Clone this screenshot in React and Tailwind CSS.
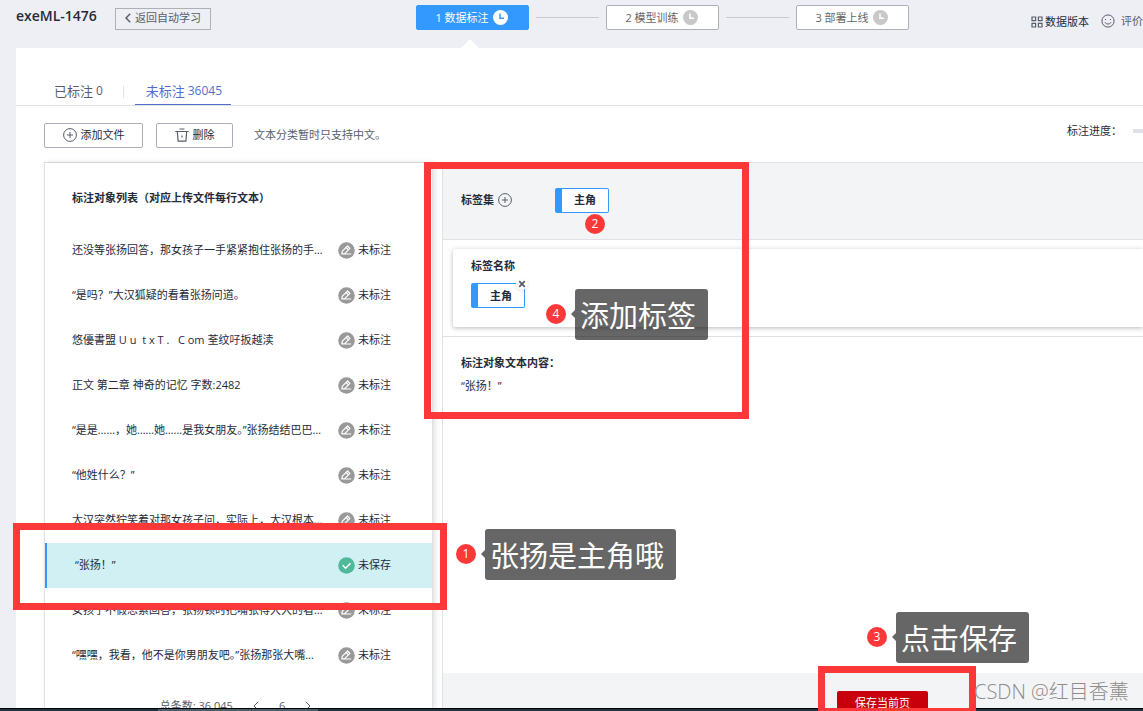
import React, { useState } from "react";

const rows = [
  { text: "还没等张扬回答，那女孩子一手紧紧抱住张扬的手…", status: "未标注" },
  { text: "“是吗？”大汉狐疑的看着张扬问道。", status: "未标注" },
  { text: "悠優書盟 U u  t x T .   C om 荃纹吇扳越渎", status: "未标注" },
  { text: "正文 第二章 神奇的记忆 字数:2482", status: "未标注" },
  { text: "“是是……，她……她……是我女朋友。”张扬结结巴巴…", status: "未标注" },
  { text: "“他姓什么？”", status: "未标注" },
  { text: "大汉突然狞笑着对那女孩子问，实际上，大汉根本…", status: "未标注" },
  { text: "“张扬！”", status: "未保存" },
  { text: "女孩子不假思索回答，张扬顿时把嘴张得大大的看…", status: "未标注" },
  { text: "“嘿嘿，我看，他不是你男朋友吧。”张扬那张大嘴…", status: "未标注" },
];

const steps = ["1 数据标注", "2 模型训练", "3 部署上线"];

const PlusCircle = () => (
  <svg viewBox="0 0 14 14" className="size-3.5 shrink-0" fill="none" stroke="#575d6c">
    <circle cx="7" cy="7" r="6.4" />
    <path d="M7 4v6M4 7h6" />
  </svg>
);

const TrashIcon = () => (
  <svg viewBox="0 0 14 14" className="size-3.5 shrink-0" fill="none" stroke="#575d6c" strokeWidth="1.2">
    <path d="M0.3 3.5h13.4M4.5 1h5M2.3 3.5l0.8 9.7h7.8l0.8-9.7M7 7.5v2" />
  </svg>
);

const ClockIcon = ({ active }) => (
  <svg viewBox="0 0 15 15" className="size-[15px] shrink-0" fill="none">
    <circle cx="7.5" cy="7.5" r="7.5" fill={active ? "#fff" : "#c8c8c8"} />
    <path d="M7 3.5v4.7h4" stroke={active ? "#3399ff" : "#fff"} strokeWidth="1.5" />
  </svg>
);

const GridIcon = () => (
  <svg viewBox="0 0 12 12" className="size-3 shrink-0" fill="none" stroke="#575d6c" strokeWidth="1.2">
    <path d="M1 1h3.6v3.6H1zM7.4 1H11v3.6H7.4zM1 7.4h3.6V11H1zM7.4 7.4H11V11H7.4z" />
  </svg>
);

const SmileIcon = () => (
  <svg viewBox="0 0 14 14" className="size-3.5 shrink-0" fill="none" stroke="#575d6c">
    <circle cx="7" cy="7" r="6.1" />
    <path d="M4.5 5v1M9.5 5v1M4 8.3c1 2.3 5 2.3 6 0" />
  </svg>
);

const StatusIcon = ({ done }) => (
  <svg viewBox="0 0 17 17" className="size-[17px] shrink-0" fill="none" stroke="#fff">
    <circle cx="8.5" cy="8.5" r="8.3" fill={done ? "#50b99a" : "#999"} stroke="none" />
    {done ? (
      <path d="M4.7 8.3l2.9 2.9 4.9-4.9" strokeWidth="1.5" />
    ) : (
      <path
        d="M3.8 11.8l0.6-2.6 5.2-5.2 2.3 2.3-5.4 5.5zM8.2 5.5l2.2 2.3M3.8 12h9.4"
        strokeWidth="1.2"
        strokeLinejoin="round"
      />
    )}
  </svg>
);

const Tag = ({ onRemove }) => (
  <div className="relative flex h-[25px] w-[54px] items-center justify-center rounded-xs border border-l-[7px] border-[#3399ff] bg-white font-bold">
    主角
    {onRemove && (
      <button
        type="button"
        aria-label="移除"
        onClick={onRemove}
        className="absolute -top-1.5 -right-1 flex size-3 items-center justify-center rounded-full bg-white shadow"
      >
        <svg viewBox="0 0 8 8" className="size-2" stroke="#575d6c" strokeWidth="1.8">
          <path d="M1.2 1.2l5.6 5.6M6.8 1.2L1.2 6.8" />
        </svg>
      </button>
    )}
  </div>
);

const Badge = ({ n, className }) => (
  <span
    className={`absolute flex size-5 items-center justify-center rounded-full bg-[#fc3838] text-xs text-white ${className}`}
  >
    {n}
  </span>
);

const Tip = ({ text, className }) => (
  <div
    className={`absolute rounded-[3px] bg-black/60 pt-1 pr-3 pb-0.5 pl-[5px] text-[29px] leading-[45px] whitespace-nowrap text-white ${className}`}
  >
    <span className="absolute top-[21px] -left-1 border-y-4 border-r-4 border-y-transparent border-r-black/60" />
    {text}
  </div>
);

const App = () => {
  const [selected, setSelected] = useState(7);
  const [tagged, setTagged] = useState(true);

  return (
    <div className="relative flex h-screen flex-col overflow-hidden bg-[#eeeff5] font-['Open_Sans','Noto_Sans_CJK_SC',sans-serif] text-[11px] leading-4 text-[#252b3a]">
      <header className="flex h-12 shrink-0 items-start whitespace-nowrap">
        <div className="flex w-[416px] shrink-0 items-start pl-4">
          <h1 className="w-[99px] pt-1.5 text-sm leading-5 font-semibold">exeML-1476</h1>
          <button
            type="button"
            className="mt-2 flex h-[22px] w-24 items-center justify-center gap-1 border border-[#adb0b8] pb-0.5 text-[#575d6c]"
          >
            <svg viewBox="0 0 6 10" className="h-2.5 w-1.5" fill="none" stroke="#575d6c" strokeWidth="1.5">
              <path d="M5.2 0.8L1 5l4.2 4.2" />
            </svg>
            返回自动学习
          </button>
        </div>

        <nav className="flex shrink-0 items-center gap-[7px] pt-[5px]">
          {steps.map((step, i) => (
            <React.Fragment key={step}>
              {i > 0 && <span className="h-px w-[63px] bg-[#c8cacf]" />}
              <div className="relative">
                <button
                  type="button"
                  className={`flex h-[25px] w-[113px] items-center justify-center gap-1 rounded-xs border pr-0.5 ${
                    i === 0
                      ? "border-[#3399ff] bg-[#3399ff] text-white"
                      : "border-[#adb0b8] bg-white text-[#666]"
                  }`}
                >
                  {step}
                  <ClockIcon active={i === 0} />
                </button>
                {i === 0 && (
                  <span className="absolute top-[34px] left-[45px] border-x-[9px] border-b-[9px] border-x-transparent border-b-white" />
                )}
              </div>
            </React.Fragment>
          ))}
        </nav>

        <div className="ml-auto flex shrink-0 items-center pt-3">
          <a href="#versions" className="flex items-center gap-0.5 pt-0.5">
            <GridIcon />
            数据版本
          </a>
          <a href="#feedback" className="ml-3 flex items-center gap-1.5 text-[#575d6c]">
            <SmileIcon />
            评价
          </a>
        </div>
      </header>

      <main className="ml-4 flex min-h-0 flex-1 flex-col bg-white">
        <div className="flex h-[58px] shrink-0 items-end border-b border-[#dfe1e6] pl-[38px] text-[13px]">
          <button type="button" className="flex h-7 items-center gap-[3px] text-[#575d6c]">
            已标注 <span className="text-xs">0</span>
          </button>
          <span className="mb-[7px] ml-5 h-3 w-px bg-[#dfe1e6]" />
          <button
            type="button"
            className="ml-[11px] flex h-7 w-24 items-center justify-center gap-[3px] border-b border-[#526ecc] pl-0.5 text-[#526ecc]"
          >
            未标注 <span className="text-xs">36045</span>
          </button>
        </div>

        <div className="flex h-14 shrink-0 items-center pt-0.5 pl-7 whitespace-nowrap">
          <button
            type="button"
            className="flex h-[25px] w-[99px] items-center justify-center gap-1 rounded-xs border border-[#adb0b8]"
          >
            <PlusCircle />
            添加文件
          </button>
          <button
            type="button"
            className="ml-[13px] flex h-[25px] w-[77px] items-center justify-center gap-1 rounded-xs border border-[#adb0b8]"
          >
            <TrashIcon />
            删除
          </button>
          <p className="ml-[21px] text-[#575d6c]">文本分类暂时只支持中文。</p>
          <div className="ml-auto flex items-center pb-2">
            标注进度：
            <span className="ml-[11px] h-1 w-2.5 bg-[#dfe1e6]" />
          </div>
        </div>

        <div className="ml-7 flex min-h-0 flex-1 border-t border-[#dfe1e6]">
          <section className="w-[389px] shrink-0 overflow-hidden border-x border-[#dfe1e6] shadow-[2px_0_6px_rgba(0,0,0,0.12)]">
            <h2 className="pt-[27px] pb-[22px] pl-[27px] font-bold">
              标注对象列表（对应上传文件每行文本）
            </h2>
            <ul>
              {rows.map((row, i) => (
                <li key={row.text}>
                  <button
                    type="button"
                    onClick={() => setSelected(i)}
                    className={`flex h-[45px] w-full items-center pb-px text-left whitespace-pre ${
                      i === selected ? "border-l-2 border-[#3399ff] bg-[#d0f0f3] pl-7" : "pl-[27px]"
                    }`}
                  >
                    <span className="flex-1">{row.text}</span>
                    <span className="flex w-[94px] items-center gap-[3px]">
                      <StatusIcon done={row.status === "未保存"} />
                      {row.status}
                    </span>
                  </button>
                </li>
              ))}
            </ul>
            <div className="flex items-center justify-center pt-5 pr-1.5 text-[#575d6c]">
              <span>总条数: 36,045</span>
              <button type="button" aria-label="上一页" className="ml-5">
                <svg viewBox="0 0 6 10" className="h-2.5 w-1.5" fill="none" stroke="#575d6c">
                  <path d="M5.2 0.8L1 5l4.2 4.2" />
                </svg>
              </button>
              <span className="mx-5">6</span>
              <button type="button" aria-label="下一页">
                <svg viewBox="0 0 6 10" className="h-2.5 w-1.5" fill="none" stroke="#575d6c">
                  <path d="M0.8 0.8L5 5 0.8 9.2" />
                </svg>
              </button>
            </div>
          </section>

          <section className="ml-[9px] flex min-w-0 flex-1 flex-col overflow-hidden border-l border-[#dfe1e6]">
            <div className="flex h-[77px] shrink-0 items-center border-b border-[#dfe1e6] bg-[#f3f4f6] pb-0.5 pl-[18px]">
              <div className="flex w-[94px] items-center gap-1 font-bold">
                标签集
                <button type="button" aria-label="添加标签">
                  <PlusCircle />
                </button>
              </div>
              <Tag />
            </div>

            <div className="h-[97px] shrink-0 border-b border-[#dfe1e6] py-[9px] pl-2.5">
              <div className="h-full rounded-l-xs pt-[9px] pl-[18px] shadow-[0_1px_5px_rgba(0,0,0,0.28)]">
                <h3 className="mb-[9px] font-bold">标签名称</h3>
                {tagged && <Tag onRemove={() => setTagged(false)} />}
              </div>
            </div>

            <div className="min-h-0 flex-1 pt-[18px] pl-[18px]">
              <h3 className="font-bold">标注对象文本内容：</h3>
              <p className="mt-[7px]">{rows[selected].text}</p>
            </div>

            <footer className="h-[35px] shrink-0 overflow-hidden bg-[#f3f4f6] pt-[18px] pl-[394px]">
              <button type="button" className="h-6 w-[91px] rounded-xs bg-[#c7000b] text-white">
                保存当前页
              </button>
            </footer>
          </section>
        </div>
      </main>

      <div className="h-[3px] shrink-0 border-t border-black bg-[#1c3540]">
        <div className="ml-[158px] h-full w-40 bg-[#47606b]" />
      </div>

      {/* annotations on top of the page */}
      <div className="pointer-events-none absolute inset-0 overflow-hidden">
        <div className="absolute top-[162px] left-[424px] h-[257px] w-[325px] border-[7px] border-[#fc3838]" />
        <div className="absolute top-[523px] left-[13px] h-[87px] w-[434px] border-[7px] border-[#fc3838]" />
        <div className="absolute top-[666px] left-[818px] h-[49px] w-[158px] border-[7px] border-[#fc3838]" />
        <Badge n="1" className="top-[544px] left-[456px]" />
        <Badge n="2" className="top-[214px] left-[585px]" />
        <Badge n="3" className="top-[627px] left-[867px]" />
        <Badge n="4" className="top-[304px] left-[546px]" />
        <Tip text="张扬是主角哦" className="top-[529px] left-[485px]" />
        <Tip text="添加标签" className="top-[289px] left-[575px]" />
        <Tip text="点击保存" className="top-[612px] left-[896px]" />
        <span className="absolute top-[680px] left-[974px] text-xl leading-6 font-light whitespace-nowrap text-[#8c8c8c]">
          CSDN @红目香薰
        </span>
      </div>
    </div>
  );
};

export default App;
